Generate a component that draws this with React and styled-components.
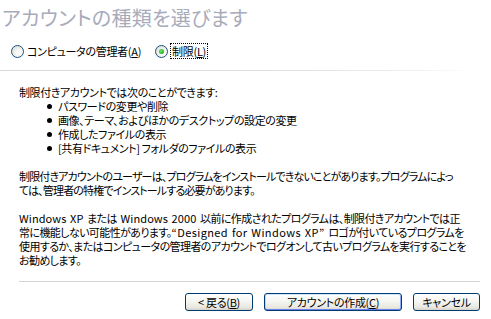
import React from 'react';
import styled, { createGlobalStyle } from 'styled-components';

const GlobalStyle = createGlobalStyle`
  html, body {
    margin: 0;
    padding: 0;
    background: #ffffff;
  }
  body {
    font-family: "Noto Sans CJK JP", "Liberation Sans", sans-serif;
    font-size: 11px;
    color: #000000;
  }
`;

const Page = styled.div`
  width: 491px;
  height: 319px;
  display: flex;
  flex-direction: column;
  background: #fff;
  overflow: hidden;
  font-feature-settings: "palt";
`;

const Title = styled.h1`
  margin: 0;
  padding: 4px 0 0 2px;
  height: 28px;
  font-size: 20px;
  font-weight: 400;
  line-height: 28px;
  color: #a7abba;
  letter-spacing: 0.3px;
`;

const RadioRow = styled.div`
  display: flex;
  align-items: center;
  gap: 14px;
  padding: 12px 0 0 11px;
  height: 20px;
`;

const RadioLabel = styled.label`
  display: flex;
  align-items: center;
  gap: 3px;
  line-height: 14px;
  letter-spacing: -0.3px;
`;

const RadioCircle = styled.span`
  width: 11px;
  height: 11px;
  border-radius: 50%;
  border: 1px solid #1c5180;
  background: radial-gradient(circle at 65% 65%, #ffffff 0%, #f3f3ef 40%, #d6d5cc 100%);
  display: flex;
  align-items: center;
  justify-content: center;
`;

const RadioDot = styled.span`
  width: 5px;
  height: 5px;
  border-radius: 50%;
  background: radial-gradient(circle at 40% 40%, #6de86a 0%, #2fb52c 60%, #1c8f1a 100%);
`;

const FocusText = styled.span`
  outline: 1px dotted #000;
  padding: 0 1px;
`;

const Key = styled.span`
  text-decoration: underline;
  text-underline-offset: 1px;
`;

const TopRule = styled.div`
  margin-top: 12px;
  height: 1px;
  background: linear-gradient(to right, #d8d8d8 0%, #dcdcdc 50%, #ececec 80%, #ffffff 97%);
`;

const Content = styled.div`
  padding: 14px 0 0 19px;
  line-height: 14px;
  letter-spacing: -0.4px;
  white-space: nowrap;
  flex: 1;
`;

const Para = styled.p`
  margin: 0 0 ${p => (p.$tight ? 0 : 14)}px 0;
  letter-spacing: ${p => p.$ls ?? -0.4}px;
`;

const Latin = styled.span`
  letter-spacing: ${p => p.$ls ?? 0.3}px;
  word-spacing: 1px;
`;

const Bullets = styled.ul`
  list-style: none;
  margin: 0 0 14px 0;
  padding: 0 0 0 39px;
`;

const Bullet = styled.li`
  position: relative;
  &::before {
    content: "";
    position: absolute;
    left: -11px;
    top: 5px;
    width: 5px;
    height: 5px;
    border-radius: 50%;
    background: #000;
  }
`;

const BottomRule = styled.div`
  margin: 0 11px 0 19px;
  height: 1px;
  background: #d4d4d4;
`;

const ButtonRow = styled.div`
  display: flex;
  justify-content: flex-end;
  gap: 11px;
  padding: 12px 11px 8px 0;
`;

const Button = styled.button`
  width: ${p => p.$w}px;
  height: 18px;
  padding: 0;
  border: 1px solid #003c74;
  border-radius: 3px;
  font-family: inherit;
  font-size: 11px;
  line-height: 14px;
  letter-spacing: -0.3px;
  color: #000;
  background: linear-gradient(to bottom, #ffffff 0%, #f4f4f0 50%, #e8e7df 85%, #d6d0c5 100%);
  box-shadow: ${p => p.$default
    ? 'inset 0 1px 0 #cee7ff, inset 0 -1px 0 #6982ee, inset 1px 0 0 #bcd4f6, inset -1px 0 0 #89adf4'
    : 'none'};
  font-feature-settings: "palt";
`;

export default function App() {
  return (
    <Page>
      <GlobalStyle />
      <Title>アカウントの種類を選びます</Title>
      <RadioRow>
        <RadioLabel>
          <RadioCircle />
          <span>コンピュータの管理者(<Key>A</Key>)</span>
        </RadioLabel>
        <RadioLabel>
          <RadioCircle><RadioDot /></RadioCircle>
          <FocusText>制限(<Key>L</Key>)</FocusText>
        </RadioLabel>
      </RadioRow>
      <TopRule />
      <Content>
        <Para $tight>制限付きアカウントでは次のことができます:</Para>
        <Bullets>
          <Bullet>パスワードの変更や削除</Bullet>
          <Bullet>画像、テーマ、およびほかのデスクトップの設定の変更</Bullet>
          <Bullet>作成したファイルの表示</Bullet>
          <Bullet>[共有ドキュメント] フォルダのファイルの表示</Bullet>
        </Bullets>
        <Para $ls={-0.85}>
          制限付きアカウントのユーザーは、プログラムをインストールできないことがあります。プログラムによっ<br />
          ては、管理者の特権でインストールする必要があります。
        </Para>
        <Para $ls={-0.6}>
          <Latin $ls={0.1}>Windows XP </Latin>または<Latin $ls={0.1}> Windows 2000 </Latin>以前に作成されたプログラムは、制限付きアカウントでは正<br />
          常に機能しない可能性があります。<Latin $ls={0.4}>“Designed for Windows XP” </Latin>ロゴが付いているプログラムを<br />
          使用するか、またはコンピュータの管理者のアカウントでログオンして古いプログラムを実行することを<br />
          お勧めします。
        </Para>
      </Content>
      <BottomRule />
      <ButtonRow>
        <Button $w={68}>&lt; 戻る(<Key>B</Key>)</Button>
        <Button $w={138} $default>アカウントの作成(<Key>C</Key>)</Button>
        <Button $w={67}>キャンセル</Button>
      </ButtonRow>
    </Page>
  );
}
